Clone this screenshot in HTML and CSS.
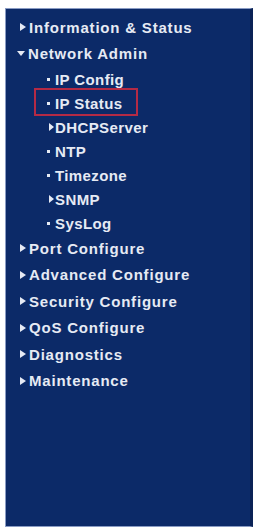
FILE: index.html
```html
<!DOCTYPE html>
<html lang="en">
<head>
  <meta charset="UTF-8">
  <meta name="viewport" content="width=device-width, initial-scale=1.0">
  <title>Menu</title>
  <link rel="stylesheet" href="styles.css">
</head>
<body>
  <div class="panel">
    <ul class="menu">
      <li class="top closed">Information &amp; Status</li>
      <li class="top open">Network Admin</li>
      <li>
        <ul class="sub">
          <li class="leaf">IP Config</li>
          <li class="leaf marked">IP Status</li>
          <li class="node">DHCPServer</li>
          <li class="leaf">NTP</li>
          <li class="leaf">Timezone</li>
          <li class="node">SNMP</li>
          <li class="leaf">SysLog</li>
        </ul>
      </li>
      <li class="top closed">Port Configure</li>
      <li class="top closed">Advanced Configure</li>
      <li class="top closed">Security Configure</li>
      <li class="top closed">QoS Configure</li>
      <li class="top closed">Diagnostics</li>
      <li class="top closed">Maintenance</li>
    </ul>
  </div>
</body>
</html>
```

FILE: styles.css
```css
html, body {
  margin: 0;
  padding: 0;
  background: #fff;
}
.panel {
  margin: 8px 0 0 5px;
  width: 248px;
  height: 519px;
  background: #0c2a68;
  border: 1px solid #8a9cc4;
  border-right: 3px solid #0a2256;
  box-sizing: border-box;
  padding: 5px 0 0 14px;
  font-family: "Liberation Sans", Arial, sans-serif;
  font-weight: bold;
  font-size: 15px;
  letter-spacing: 0.8px;
  color: #e6eaf4;
}
.menu, .sub {
  list-style: none;
  margin: 0;
  padding: 0;
}
.top {
  height: 26.5px;
  display: flex;
  align-items: center;
}
.top::before {
  content: "";
  display: inline-block;
  margin-right: 3px;
}
.closed::before {
  border-left: 6px solid #e6eaf4;
  border-top: 4.5px solid transparent;
  border-bottom: 4.5px solid transparent;
}
.open::before {
  margin-left: -3px;
  margin-right: 3px;
  border-top: 5px solid #e6eaf4;
  border-left: 4.5px solid transparent;
  border-right: 4.5px solid transparent;
}
.sub {
  padding-left: 27px;
  letter-spacing: 0.4px;
}
.sub li {
  height: 24px;
  display: flex;
  align-items: center;
  position: relative;
}
.leaf::before {
  content: "";
  width: 3px;
  height: 3px;
  background: #e6eaf4;
  margin-right: 5px;
}
.node::before {
  content: "";
  margin-left: 2px;
  margin-right: 1px;
  border-left: 5px solid #e6eaf4;
  border-top: 4px solid transparent;
  border-bottom: 4px solid transparent;
}
.marked::after {
  content: "";
  position: absolute;
  left: -13px;
  top: -3px;
  width: 104px;
  height: 28px;
  border: 2px solid #b42a45;
  box-sizing: border-box;
}
```
